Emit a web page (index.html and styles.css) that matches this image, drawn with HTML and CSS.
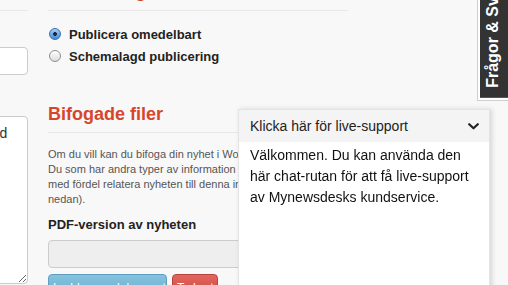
FILE: index.html
```html
<!DOCTYPE html>
<html lang="sv">
<head>
<meta charset="utf-8">
<title>Ny nyhet</title>
<link rel="stylesheet" href="styles.css">
</head>
<body>
<div class="page">
  <div class="col-left">
    <h2 class="section-title first">Innehåll</h2>
    <input class="text-input" type="text" value="">
    <textarea class="body-text">Detta är brödtexten till nyhet med bilder och länkar.</textarea>
  </div>
  <div class="col-main">
    <h2 class="section-title first">Publicering</h2>
    <div class="radios">
      <label class="radio-row"><input type="radio" name="pub" checked><span>Publicera omedelbart</span></label>
      <label class="radio-row"><input type="radio" name="pub"><span>Schemalagd publicering</span></label>
    </div>
    <h2 class="section-title attach">Bifogade filer</h2>
    <p class="help">Om du vill kan du bifoga din nyhet i Word- eller PDF-format.<br>Du som har andra typer av information att bifoga kan<br>med fördel relatera nyheten till denna information (se<br>nedan).</p>
    <div class="field-label">PDF-version av nyheten</div>
    <div class="file-input"></div>
    <div class="buttons">
      <button class="btn btn-info" type="button">Ladda upp dokument</button>
      <button class="btn btn-danger" type="button">Ta bort</button>
    </div>
  </div>
</div>

<div class="faq-tab"><div class="faq-inner">Frågor &amp; Svar</div></div>

<div class="chat">
  <div class="chat-head">
    <span>Klicka här för live-support</span>
    <svg class="chev" width="11" height="7" viewBox="0 0 11 7"><polyline points="1.2,1.2 5.5,5.3 9.8,1.2" fill="none" stroke="#222" stroke-width="2.2" stroke-linecap="round" stroke-linejoin="round"/></svg>
  </div>
  <div class="chat-body">Välkommen. Du kan använda den här chat-rutan för att få live-support av Mynewsdesks kundservice.</div>
</div>
</body>
</html>
```
FILE: styles.css
```css
html, body {
  margin: 0;
  padding: 0;
  overflow: hidden;
  height: 100%;
}
body {
  background: #f9f8f8;
  font-family: "Liberation Sans", Arial, sans-serif;
  color: #333;
}
.page {
  display: flex;
  gap: 20px;
  margin-left: -206px;
  margin-top: -19px;
}
.col-left {
  width: 234px;
  flex: none;
  display: flex;
  flex-direction: column;
}
.col-main {
  width: 300px;
  flex: none;
  display: flex;
  flex-direction: column;
}
.section-title {
  margin: 0;
  font-size: 18px;
  line-height: 20px;
  font-weight: bold;
  color: #d5462c;
  padding-bottom: 8px;
  border-bottom: 1px solid #e9e7e8;
}
.section-title.first {
  padding-bottom: 9px;
}
.text-input {
  margin: 36px 0 0;
  box-sizing: border-box;
  width: 100%;
  height: 28px;
  border: 1px solid #cccccc;
  border-radius: 4px;
  background: #fff;
  padding: 4px 6px;
  font: 14px "Liberation Sans", Arial, sans-serif;
}
.body-text {
  margin: 41px 0 0;
  box-sizing: border-box;
  width: 100%;
  height: 168px;
  border: 1px solid #cccccc;
  border-radius: 4px;
  background: #fff;
  padding: 6px 6px;
  font: 14px/20px "Liberation Sans", Arial, sans-serif;
  color: #333;
  resize: vertical;
  overflow: hidden;
}
.radios {
  margin-top: 12px;
  display: flex;
  flex-direction: column;
}
.radio-row {
  display: flex;
  align-items: center;
  height: 22px;
  gap: 8px;
  font-size: 13px;
  font-weight: bold;
  color: #222;
}
.radio-row input {
  -webkit-appearance: none;
  appearance: none;
  margin: 0 0 0 1px;
  width: 12px;
  height: 12px;
  border-radius: 50%;
  border: 1px solid #8e8e8e;
  background: linear-gradient(#ffffff, #dcdcdc);
  box-sizing: border-box;
}
.radio-row input:checked {
  border-color: #3f6fa8;
  background: radial-gradient(circle, #1c2a3a 0 1.6px, transparent 2.2px), linear-gradient(#a7cdf4, #3d8ae0);
}
.attach {
  margin-top: 37px;
}
.help {
  margin: 14px 0 0;
  font-size: 11px;
  line-height: 15px;
  color: #555;
  white-space: nowrap;
}
.field-label {
  margin-top: 9px;
  font-size: 13px;
  line-height: 18px;
  font-weight: bold;
  color: #222;
}
.file-input {
  margin-top: 6px;
  height: 28px;
  box-sizing: border-box;
  border: 1px solid #cccccc;
  border-radius: 4px;
  background: #eeeeee;
}
.buttons {
  margin-top: 6px;
  display: flex;
  gap: 5px;
}
.btn {
  height: 28px;
  padding: 0 4px;
  border-radius: 4px;
  font: 12px "Liberation Sans", Arial, sans-serif;
  color: #fff;
  white-space: nowrap;
  overflow: hidden;
}
.btn-info {
  width: 119px;
  background: linear-gradient(#86c3de, #5fa8cb);
  border: 1px solid #5d9ec0;
}
.btn-danger {
  width: 46px;
  background: linear-gradient(#e2665f, #c94039);
  border: 1px solid #b8433c;
}
.faq-tab {
  position: fixed;
  left: 477px;
  bottom: 184px;
  border: 1px solid #cfcfcf;
  border-top: none;
  padding: 0 2px 2px 2px;
  background: #fff;
}
.faq-inner {
  writing-mode: vertical-rl;
  transform: rotate(180deg);
  background: #333333;
  color: #fff;
  font-size: 16px;
  line-height: 18px;
  font-weight: bold;
  padding: 10px 4px 40px 6px;
  white-space: nowrap;
}
.chat {
  position: fixed;
  left: 238px;
  top: 109px;
  width: 252px;
  bottom: -10px;
  box-sizing: border-box;
  background: #fff;
  border: 1px solid #e4e4e4;
  box-shadow: 2px 0 5px rgba(0, 0, 0, 0.14);
}
.chat-head {
  height: 32px;
  background: #f4f4f4;
  display: flex;
  align-items: center;
  justify-content: space-between;
  padding: 0 10px 0 11px;
  font-size: 14px;
  color: #222;
}
.chat-body {
  padding: 3px 11px;
  font-size: 14px;
  line-height: 21px;
  color: #111;
}
```
